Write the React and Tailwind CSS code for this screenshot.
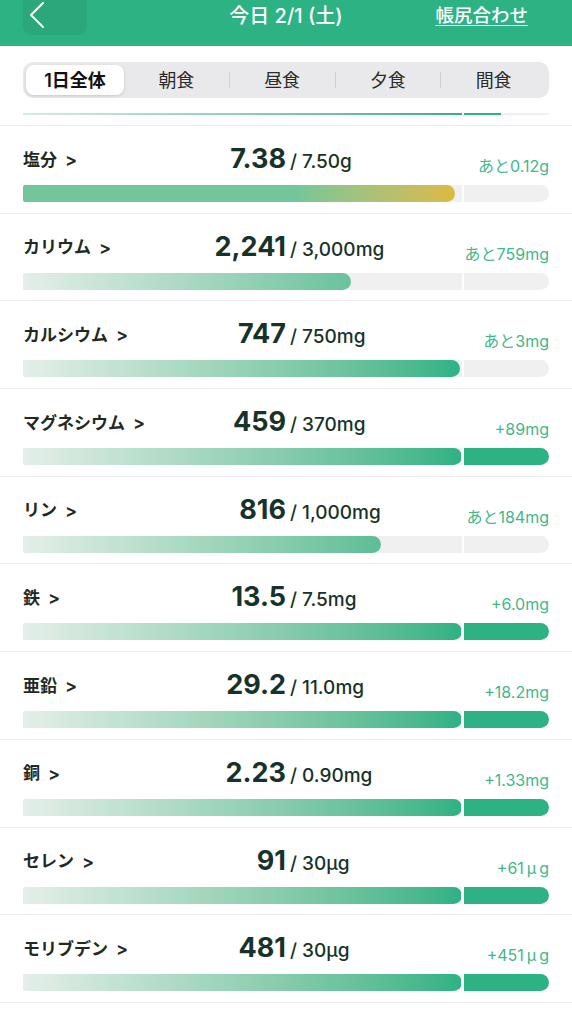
import React from 'react';

const rows = [
  { name: '塩分', value: '7.38', target: '7.50g', ratio: 7.38 / 7.5, note: 'あと0.12g', warn: true },
  { name: 'カリウム', value: '2,241', target: '3,000mg', ratio: 2241 / 3000, note: 'あと759mg' },
  { name: 'カルシウム', value: '747', target: '750mg', ratio: 747 / 750, note: 'あと3mg' },
  { name: 'マグネシウム', value: '459', target: '370mg', ratio: 1, over: true, note: '+89mg' },
  { name: 'リン', value: '816', target: '1,000mg', ratio: 0.816, note: 'あと184mg' },
  { name: '鉄', value: '13.5', target: '7.5mg', ratio: 1, over: true, note: '+6.0mg' },
  { name: '亜鉛', value: '29.2', target: '11.0mg', ratio: 1, over: true, note: '+18.2mg' },
  { name: '銅', value: '2.23', target: '0.90mg', ratio: 1, over: true, note: '+1.33mg' },
  { name: 'セレン', value: '91', target: '30µg', ratio: 1, over: true, note: '+61', micro: true },
  { name: 'モリブデン', value: '481', target: '30µg', ratio: 1, over: true, note: '+451', micro: true },
];

const tabs = ['1日全体', '朝食', '昼食', '夕食', '間食'];

const Bar = ({ ratio, over, warn }) => (
  <div className="flex h-[17px] gap-[2px]">
    <div className="flex-1 overflow-hidden rounded-l-[2px] bg-[#f0f0f0]">
      <div
        className="h-full overflow-hidden rounded-r-full"
        style={{ width: over ? '100%' : `${ratio * 100}%` }}
      >
        {warn ? (
          <div className="h-full w-[438px] bg-linear-to-r from-[#72c69a] from-[62%] to-[#dcb93f] to-[99%]" />
        ) : (
          <div className="h-full w-[438px] bg-linear-to-r from-[#e4efe9] to-[#2db284]" />
        )}
      </div>
    </div>
    <div
      className={`w-[85px] rounded-r-full ${over ? 'bg-[#2db284]' : 'bg-[#f0f0f0]'}`}
    />
  </div>
);

const Row = ({ row }) => (
  <div className="border-b border-[#ececec] px-[23px] pt-[17px] pb-[10.7px]">
    <div className="flex h-[32px] items-end">
      <div className="flex w-[263px] items-end justify-between">
        <div className="mb-[6px] flex items-center text-[17px] leading-none font-bold text-[#1f2a25]">
          {row.name}
          <span className="ml-[8px] text-[18px] font-semibold">&gt;</span>
        </div>
        <div className="mb-[3px] text-[27px] leading-none font-bold text-[#17322a]">
          {row.value}
        </div>
      </div>
      <div className="flex flex-1 items-end justify-between">
        <div className="mb-[4px] ml-[4px] text-[19px] leading-none font-medium text-[#17322a]">
          / {row.target}
        </div>
        <div className="mb-[1px] text-[16px] leading-none text-[#3fb88a]">
          {row.note}
          {row.micro && (
            <>
              <span className="ml-[3px] mr-[3px]">μ</span>g
            </>
          )}
        </div>
      </div>
    </div>
    <div className="mt-[10px]">
      <Bar ratio={row.ratio} over={row.over} warn={row.warn} />
    </div>
  </div>
);

export default function App() {
  return (
    <div className="min-h-[1024px] w-[572px] overflow-hidden bg-white font-['Inter','Noto_Sans_CJK_JP',sans-serif]">
      {/* header */}
      <div className="grid h-[46px] grid-cols-[1fr_auto_1fr] items-start bg-[#2db283]">
        <div className="pl-[23px]">
          <div className="h-[35px] w-[64px] rounded-b-[8px] bg-black/5 pt-[2px] pl-[5px]">
            <svg width="17" height="26" viewBox="0 0 17 26" fill="none">
              <polyline points="15,1 3,13 15,25" stroke="white" strokeWidth="2" strokeLinecap="round" strokeLinejoin="round" />
            </svg>
          </div>
        </div>
        <div className="pt-[5px] text-[20px] leading-[22px] font-medium text-white">
          今日 2/1 (土)
        </div>
        <div className="flex justify-end pt-[4px] pr-[44px]">
          <span className="text-[18.5px] leading-[22px] font-medium text-white underline underline-offset-[3px]">
            帳尻合わせ
          </span>
        </div>
      </div>

      {/* meal tabs */}
      <div className="px-[23px] pt-[16px]">
        <div className="flex h-[36px] items-center rounded-[10px] bg-[#e9e9eb] p-[3px]">
          {tabs.map((t, i) => (
            <React.Fragment key={t}>
              {i >= 2 && <span className="h-[16px] w-px bg-[#d0d0d4]" />}
              {i === 0 ? (
                <div className="flex h-full w-[98px] items-center justify-center rounded-[8px] bg-white text-[18px] font-semibold text-[#111] shadow-[0_1px_3px_rgba(0,0,0,0.15)]">
                  {t}
                </div>
              ) : (
                <div className="flex h-full flex-1 items-center justify-center text-[18px] text-[#2a2a2a]">
                  {t}
                </div>
              )}
            </React.Fragment>
          ))}
        </div>
      </div>

      {/* previous row, scrolled out of view */}
      <div className="h-[28px] border-b border-[#ececec] px-[23px] pt-[15px]">
        <div className="flex h-[2px] gap-[2px]">
          <div className="flex-1 bg-linear-to-r from-[#d6ebe1] to-[#2db284]" />
          <div className="w-[85px] bg-[#f0f0f0]">
            <div className="h-full w-[44%] bg-[#2db284]" />
          </div>
        </div>
      </div>

      {rows.map((r) => (
        <Row key={r.name} row={r} />
      ))}
    </div>
  );
}
